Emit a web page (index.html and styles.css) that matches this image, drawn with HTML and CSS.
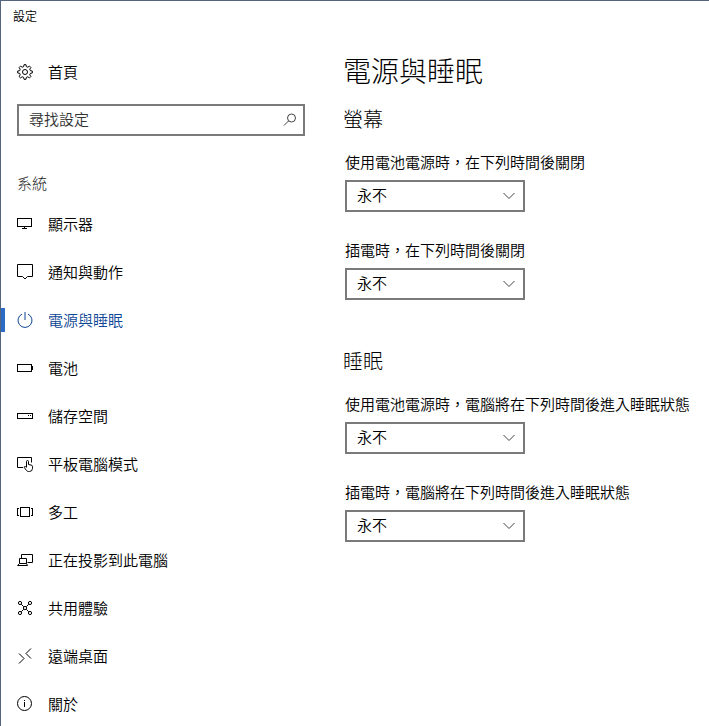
FILE: index.html
```html
<!DOCTYPE html>
<html lang="zh-Hant">
<head>
  <meta charset="utf-8">
  <meta name="viewport" content="width=device-width, initial-scale=1">
  <title>設定</title>
  <link rel="stylesheet" href="styles.css">
</head>

<body>
  <div class="window">

    <header class="title-bar">設定</header>

    <div class="window-body">

      <aside class="sidebar">

        <a class="nav-item" href="#home">
          <svg class="icon smooth" viewBox="0 0 16 16">
            <path d="M6.6 2.7 L7 0.7 H9 L9.4 2.7 L10.8 3.2 L12.5 2.1 L13.9 3.5 L12.8 5.2 L13.3 6.6 L15.3 7 V9 L13.3 9.4 L12.8 10.8 L13.9 12.5 L12.5 13.9 L10.8 12.8 L9.4 13.3 L9 15.3 H7 L6.6 13.3 L5.2 12.8 L3.5 13.9 L2.1 12.5 L3.2 10.8 L2.7 9.4 L0.7 9 V7 L2.7 6.6 L3.2 5.2 L2.1 3.5 L3.5 2.1 L5.2 3.2 Z"/>
            <circle cx="8" cy="8" r="2.5"/>
          </svg>
          首頁
        </a>

        <div class="search-box">
          <input class="search-input" type="text" placeholder="尋找設定" aria-label="尋找設定">
          <svg class="search-icon" viewBox="0 0 14 14">
            <circle cx="8.5" cy="5" r="4"/>
            <path d="M5.6 7.9 L1 12.5"/>
          </svg>
        </div>

        <h2 class="sidebar-title">系統</h2>

        <nav class="nav">
          <a class="nav-item" href="#display">
            <svg class="icon" viewBox="0 0 16 16">
              <path d="M0.5 2.5 H14.5 V10.5 H0.5 Z M7.5 10.5 V12.5 M5 12.5 H10"/>
            </svg>
            顯示器
          </a>
          <a class="nav-item" href="#notifications">
            <svg class="icon smooth" viewBox="0 0 16 16">
              <path d="M0.5 0.5 H15.5 V12.5 H10.5 L8 15 L5.5 12.5 H0.5 Z"/>
            </svg>
            通知與動作
          </a>
          <a class="nav-item selected" href="#power">
            <svg class="icon smooth" viewBox="0 0 16 16">
              <path d="M5 2.1 A7 7 0 1 0 11 2.1 M8 0 V8"/>
            </svg>
            電源與睡眠
          </a>
          <a class="nav-item" href="#battery">
            <svg class="icon" viewBox="0 0 16 16">
              <path d="M0.5 4.5 H14.5 V11.5 H0.5 Z M15.5 6 V10"/>
            </svg>
            電池
          </a>
          <a class="nav-item" href="#storage">
            <svg class="icon" viewBox="0 0 16 16">
              <path d="M0.5 5.5 H15.5 V10.5 H0.5 Z M11 7.5 H12 M13 7.5 H14"/>
            </svg>
            儲存空間
          </a>
          <a class="nav-item" href="#tablet">
            <svg class="icon smooth" viewBox="0 0 16 16">
              <path d="M6 11.5 H0.5 V1.5 H14.5 V6.5"/>
              <path d="M9.5 11 V5.5 Q9.5 4.5 10.5 4.5 T11.5 5.5 V8.5 L14 9 Q15.5 9.3 15.5 10.5 V12.5 Q15.2 15.5 12.5 15.5 H11.5 Q10.2 15.5 9.5 14.5 L7.3 11.6 Q7 10.5 8 10.5 Q8.6 10.5 9.5 11.5"/>
            </svg>
            平板電腦模式
          </a>
          <a class="nav-item" href="#multitasking">
            <svg class="icon" viewBox="0 0 16 16">
              <path d="M3.5 3.5 H12.5 V12.5 H3.5 Z M2 4.5 H0.5 V11.5 H2 M14 4.5 H15.5 V11.5 H14"/>
            </svg>
            多工
          </a>
          <a class="nav-item" href="#projecting">
            <svg class="icon smooth" viewBox="0 0 16 16">
              <path d="M4.5 6 V2.5 H15.5 V10.5 H10.5"/>
              <path d="M2.5 6.5 H9.5 V11.5 H2.5 Z M2.5 11.5 L0.5 13.5 H10.5 L9.5 11.5"/>
            </svg>
            正在投影到此電腦
          </a>
          <a class="nav-item" href="#shared">
            <svg class="icon smooth" viewBox="0 0 16 16">
              <circle cx="3" cy="3" r="1.6"/>
              <circle cx="13" cy="3" r="1.6"/>
              <circle cx="3" cy="13" r="1.6"/>
              <circle cx="13" cy="13" r="1.6"/>
              <circle cx="8" cy="8" r="1.6"/>
              <path d="M4.2 4.2 L6.8 6.8 M11.8 4.2 L9.2 6.8 M4.2 11.8 L6.8 9.2 M11.8 11.8 L9.2 9.2"/>
            </svg>
            共用體驗
          </a>
          <a class="nav-item" href="#remote">
            <svg class="icon smooth" viewBox="0 0 16 16">
              <path d="M14 0.5 L9 5.5 L14 10.5 M2 5.5 L7 10.5 L2 15.5"/>
            </svg>
            遠端桌面
          </a>
          <a class="nav-item" href="#about">
            <svg class="icon smooth" viewBox="0 0 16 16">
              <circle cx="7.5" cy="7.5" r="7"/>
              <path d="M7.5 6 V11 M7.5 4 V5"/>
            </svg>
            關於
          </a>
        </nav>

      </aside>

      <main class="content">
        <h1 class="page-title">電源與睡眠</h1>

        <section class="section">
          <h2 class="section-title">螢幕</h2>

          <div class="field">
            <label for="screen-battery">使用電池電源時，在下列時間後關閉</label>
            <div class="select-box">
              <select id="screen-battery"><option>永不</option></select>
              <svg class="chevron" viewBox="0 0 12 8"><path d="M0.5 1 L6 6.5 L11.5 1"/></svg>
            </div>
          </div>

          <div class="field">
            <label for="screen-plugged">插電時，在下列時間後關閉</label>
            <div class="select-box">
              <select id="screen-plugged"><option>永不</option></select>
              <svg class="chevron" viewBox="0 0 12 8"><path d="M0.5 1 L6 6.5 L11.5 1"/></svg>
            </div>
          </div>
        </section>

        <section class="section">
          <h2 class="section-title">睡眠</h2>

          <div class="field">
            <label for="sleep-battery">使用電池電源時，電腦將在下列時間後進入睡眠狀態</label>
            <div class="select-box">
              <select id="sleep-battery"><option>永不</option></select>
              <svg class="chevron" viewBox="0 0 12 8"><path d="M0.5 1 L6 6.5 L11.5 1"/></svg>
            </div>
          </div>

          <div class="field">
            <label for="sleep-plugged">插電時，電腦將在下列時間後進入睡眠狀態</label>
            <div class="select-box">
              <select id="sleep-plugged"><option>永不</option></select>
              <svg class="chevron" viewBox="0 0 12 8"><path d="M0.5 1 L6 6.5 L11.5 1"/></svg>
            </div>
          </div>
        </section>
      </main>

    </div>
  </div>
</body>
</html>
```

FILE: styles.css
```css
* {
  box-sizing: border-box;
}

body {
  margin: 0;
  background-color: #fff;
  color: #000;
  font-family: "Noto Sans CJK TC", sans-serif;
  font-size: 15px;
  font-weight: 350;
}

h1, h2 {
  margin: 0;
  font-weight: 300;
}

input, select {
  margin: 0;
  font: inherit;
  color: inherit;
}

.window {
  height: 100vh;
  overflow: hidden;
  border-top: 1px solid #56657f;
  border-left: 1px solid #56657f;
}

.title-bar {
  padding-left: 12px;
  font-size: 12px;
  line-height: 29px;
}

.window-body {
  display: flex;
  padding-top: 18px;
}

/* sidebar */

.sidebar {
  flex: 0 0 304px;
}

.nav-item {
  display: flex;
  align-items: center;
  height: 48px;
  padding-bottom: 2px;
  color: #000;
  text-decoration: none;
}

.nav-item::before {
  content: "";
  width: 4px;
  height: 24px;
  margin-top: 2px;
  margin-right: 12px;
}

.nav-item.selected {
  color: #0f4796;
}

.nav-item.selected::before {
  background-color: #2b6cc4;
}

.icon {
  width: 16px;
  height: 16px;
  margin-top: 2px;
  margin-right: 15px;
  fill: none;
  stroke: currentColor;
  shape-rendering: crispEdges;
}

.icon.smooth {
  shape-rendering: auto;
}

.search-box {
  display: grid;
  align-items: center;
  margin: 8px 0 36px 16px;
}

.search-input {
  grid-area: 1 / 1;
  width: 100%;
  height: 32px;
  padding: 0 32px 3px 10px;
  border: 2px solid #7a7a7a;
  border-radius: 0;
  background-color: #fff;
}

.search-input::placeholder {
  color: #333;
  opacity: 1;
}

.search-icon {
  grid-area: 1 / 1;
  justify-self: end;
  width: 14px;
  height: 14px;
  margin-right: 8px;
  fill: none;
  stroke: #444;
  pointer-events: none;
}

.sidebar-title {
  margin: 0 0 6px 16px;
  font-size: 15px;
  line-height: 22px;
  color: #222;
}

/* content */

.content {
  flex: 1;
  min-width: 0;
  padding-left: 40px;
}

.page-title {
  margin: 0 0 14px -2px;
  font-size: 28px;
  line-height: 44px;
}

.section {
  margin-bottom: 48px;
}

.section-title {
  margin: 0 0 18px -2px;
  font-size: 20px;
  line-height: 26px;
}

.field + .field {
  margin-top: 26px;
}

.field label {
  display: block;
  margin-bottom: 6px;
  line-height: 24px;
}

.select-box {
  display: grid;
  align-items: center;
  width: 180px;
}

.select-box select {
  grid-area: 1 / 1;
  width: 100%;
  height: 32px;
  padding: 0 32px 3px 10px;
  border: 2px solid #7a7a7a;
  border-radius: 0;
  background-color: #fff;
  appearance: none;
}

.chevron {
  grid-area: 1 / 1;
  justify-self: end;
  width: 12px;
  height: 8px;
  margin-right: 10px;
  fill: none;
  stroke: #444;
  pointer-events: none;
}
```
